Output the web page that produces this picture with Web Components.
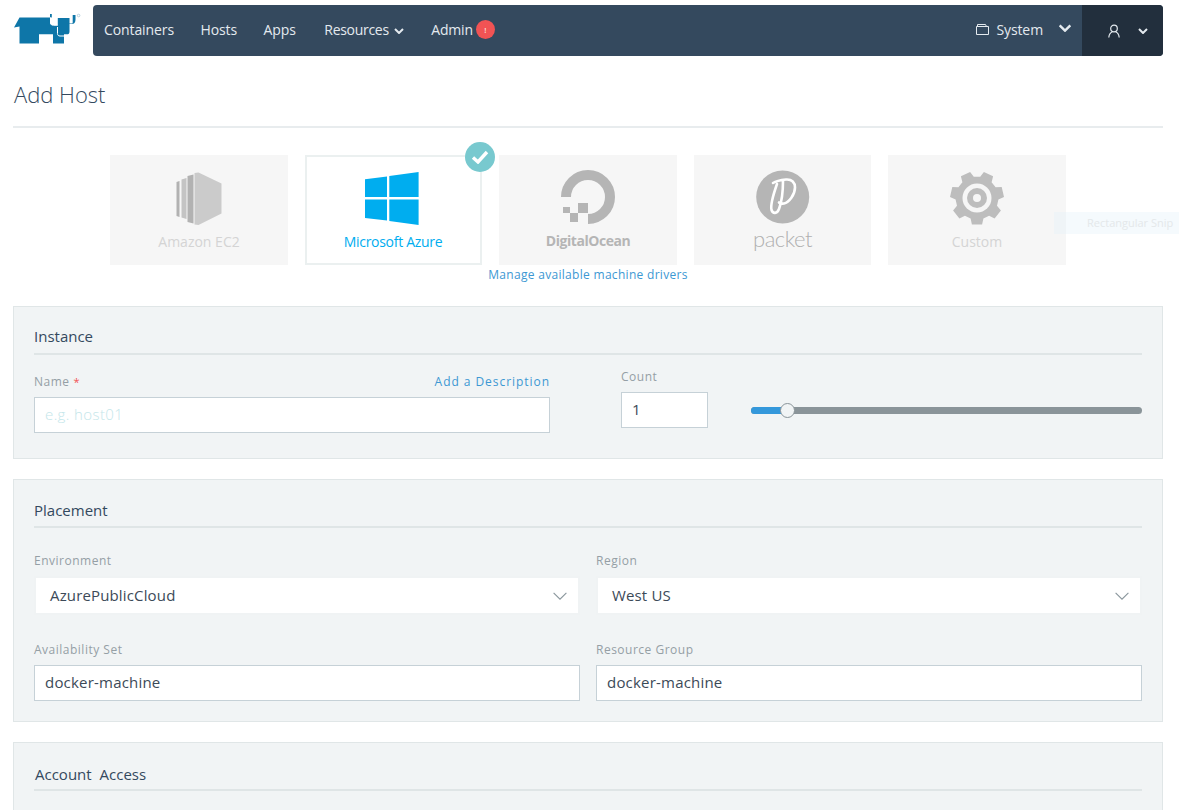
<!DOCTYPE html>
<html lang="en">
<head>
<meta charset="utf-8">
<title>Add Host</title>
<style>
    html, body { margin: 0; height: 810px; overflow: hidden; background: #fff; }
    body { font-family: "Open Sans", "Noto Sans", sans-serif; color: #3c4a58; }
</style>
</head>
<body>
<rk-page>
    <rk-nav></rk-nav>
    <rk-title>Add Host</rk-title>
    <rk-drivers>
        <rk-driver label="Amazon EC2">
            <svg slot="icon" width="46" height="54" viewBox="176.500 171 46 54">
                <path fill="#cbcbcb" d="M195 173l4-.500 23 11v30l-23 11.500-4-.500z"/>
                <path fill="#b2b2b2" d="M177 182l3-1v36l-3-1zM188 176l6-1.500v49l-6-1.500z"/>
                <path fill="#c4c4c4" d="M182 179.500l5-1.500v41l-5-1.500z"/>
            </svg>
        </rk-driver>
        <rk-driver label="Microsoft Azure" active>
            <svg slot="icon" width="54" height="54" viewBox="365 171 54 54">
                <path fill="#00adef" d="M365 179.300l22-2.700V197h-22zM389.300 176l29.300-4v25h-29.300zM365 199.600h22v21l-22-2.700zM389.300 199.600h29.300v25.400l-29.300-4z"/>
            </svg>
        </rk-driver>
        <rk-driver label="DigitalOcean" brand="do">
            <svg slot="icon" width="56" height="56" viewBox="560 170 56 56">
                <path fill="none" stroke="#b5b5b5" stroke-width="10" d="M566 197a22 22 0 1 1 22 22"/>
                <path fill="#b5b5b5" d="M578 203h10v10h-10zM570 213h8v9h-8zM563 207h7v6h-7z"/>
            </svg>
        </rk-driver>
        <rk-driver label="packet" brand="packet">
            <svg slot="icon" width="56" height="56" viewBox="755 170 56 56">
                <circle cx="782.700" cy="197" r="26.500" fill="#b5b5b5"/>
                <path fill="none" stroke="#fff" stroke-width="2.600" stroke-linecap="round" d="M773 183c3-2 8-3 13-3.500 6-.5 9 3 9 8 0 7-6 15-11 16-2 .3-4 0-5-1M783 181c0 8-1 20-4 28-2 5-6 5-7.500 1-1.500-6 2-16 5.500-26"/>
            </svg>
        </rk-driver>
        <rk-driver label="Custom">
            <svg slot="icon" width="56" height="56" viewBox="949 170 56 56">
                <path id="gear" fill="#bdbdbd"/>
                <circle cx="977" cy="198" r="14.500" fill="#f6f6f6"/>
                <circle cx="977" cy="198" r="10" fill="#bdbdbd"/>
                <circle cx="977" cy="198" r="4" fill="#f6f6f6"/>
            </svg>
        </rk-driver>
    </rk-drivers>
    <rk-link-row>Manage available machine drivers</rk-link-row>

    <rk-section heading="Instance" kind="instance">
        <rk-instance-fields></rk-instance-fields>
    </rk-section>

    <rk-section heading="Placement" kind="placement">
        <rk-field label="Environment"><rk-select value="AzurePublicCloud"></rk-select></rk-field>
        <rk-field label="Region"><rk-select value="West US"></rk-select></rk-field>
        <rk-field label="Availability Set"><rk-input value="docker-machine"></rk-input></rk-field>
        <rk-field label="Resource Group"><rk-input value="docker-machine"></rk-input></rk-field>
    </rk-section>

    <rk-section heading="Account Access" kind="account"></rk-section>
</rk-page>
<rk-snip>Rectangular Snip</rk-snip>

<script>
// Small helper: every element below is a plain shadow root plus a style block.
function defineElement (name, html, setup) {
    const template = document.createElement('template');
    template.innerHTML = html;
    class Element extends HTMLElement {
        constructor () {
            super();
            this.attachShadow({ mode: 'open' });
            this.shadowRoot.appendChild(template.content.cloneNode(true));
        }
        connectedCallback () {
            if (setup) setup(this, this.shadowRoot);
        }
    }
    customElements.define(name, Element);
}

const chevron = (w, h, sw, color) => `<svg width="${w}" height="${h}" viewBox="0 0 10 6"><path d="M1 1l4 4 4-4" fill="none" stroke="${color}" stroke-width="${sw}"/></svg>`;

// Seven tooth gear, one tooth pointing straight down.
function gearPath (cx, cy, outer, inner) {
    const teeth = 7;
    const points = [];
    for (let i = 0; i < teeth; i++) {
        const mid = Math.PI / 2 + i * 2 * Math.PI / teeth;
        [[-.30, inner], [-.19, outer], [.19, outer], [.30, inner]].forEach(([off, r]) => {
            points.push((cx + r * Math.cos(mid + off)).toFixed(1) + ' ' + (cy + r * Math.sin(mid + off)).toFixed(1));
        });
    }
    return 'M' + points.join('L') + 'z';
}
document.getElementById('gear').setAttribute('d', gearPath(977, 198, 27, 21.500));

defineElement('rk-page', `
<style>
    :host { display: block; padding: 5px 16px 0 13px; }
</style>
<slot></slot>`);

defineElement('rk-nav', `
<style>
    :host { display: flex; height: 51px; align-items: stretch; font-size: 14px; color: #e4eaef; letter-spacing: -.1px; }
    .logo { width: 80px; flex: none; }
    .bar { flex: 1; display: flex; align-items: center; justify-content: space-between; background: #34495e; border-radius: 4px; overflow: hidden; }
    .links { display: flex; align-items: center; gap: 26.500px; padding-left: 11px; padding-bottom: 2px; }
    .links span { display: flex; align-items: center; white-space: nowrap; }
    .links .res { letter-spacing: -.3px; margin-left: 2px; }
    .links .admin { margin-left: 1px; letter-spacing: -.2px; }
    .chev { margin-left: 5px; margin-top: 3px; display: flex; }
    .badge { width: 19px; height: 19px; border-radius: 50%; background: #f15354; color: #fff; font-size: 8px; font-weight: 400; display: flex; align-items: center; justify-content: center; margin-left: 3px; }
    .right { display: flex; align-items: stretch; height: 100%; }
    .env { display: flex; align-items: center; padding-right: 10px; padding-bottom: 2px; }
    .env svg.folder { margin-right: 7px; }
    .env .chev { margin-left: 15px; margin-top: -3px; }
    .user { width: 81px; background: #222f3d; display: flex; align-items: center; box-sizing: border-box; padding-left: 26px; }
    .user .chev { margin-left: 18px; margin-top: 0; }
</style>
<svg class="logo" viewBox="0 0 80 51" width="80" height="51">
    <g transform="translate(-13 -5)">
        <path fill="#0e76a8" d="M14 27.500l5.500-10H50v5c0 1.500.7 2.500 2.500 2.500h5.300v-7H69.500v5.500h2.200c.8 0 1-.4 1-1.500V15h2.300l.5 0v4.500c0 3.200-1.500 4.500-3.500 4.500H69.500v7.500c0 2-.8 2.800-2.800 2.800H64v9.200H53V34.300H39v9.200H19.500V26.500z"/>
        <path fill="#0e76a8" d="M50 14h1.800v3.500H50z"/>
        <path fill="none" stroke="#fff" stroke-width="1" d="M50.500 17.500v5c0 1.800 1 2.800 3 2.800h4.300M57.500 27v6.500c0 1.800 1 2.500 2.500 2.500h4"/>
        <circle cx="78.600" cy="15.500" r="1.300" fill="none" stroke="#8fb8cc" stroke-width=".6"/>
    </g>
</svg>
<div class="bar">
    <div class="links">
        <span>Containers</span>
        <span>Hosts</span>
        <span>Apps</span>
        <span class="res">Resources<i class="chev">${chevron(10, 6, 2, '#e4eaef')}</i></span>
        <span class="admin">Admin<b class="badge">!</b></span>
    </div>
    <div class="right">
        <div class="env">
            <svg class="folder" width="13" height="11" viewBox="0 0 13 11"><path d="M.5 2.500h12v8H.5zM1.500 2.500V.5h8l1 2" fill="none" stroke="#e4eaef"/></svg>
            <span>System</span>
            <i class="chev">${chevron(14, 8, 1.800, '#e4eaef')}</i>
        </div>
        <div class="user">
            <svg width="12" height="14" viewBox="0 0 12 14"><circle cx="6" cy="4.500" r="3.300" fill="none" stroke="#e4eaef" stroke-width="1.200"/><path d="M.8 13.500c.3-3 1.800-5 3.500-5.500M11.200 13.500c-.3-3-1.800-5-3.500-5.500" fill="none" stroke="#e4eaef" stroke-width="1.200"/></svg>
            <i class="chev">${chevron(10, 6, 2, '#e4eaef')}</i>
        </div>
    </div>
</div>`);

defineElement('rk-title', `
<style>
    :host { display: block; margin-top: 23px; height: 47px; border-bottom: 2px solid #e8ecee; font-size: 22px; font-weight: 300; line-height: 30px; color: #34495e; padding-left: 1px; }
</style>
<slot></slot>`);

defineElement('rk-drivers', `
<style>
    :host { display: flex; justify-content: center; gap: 17px; margin-top: 27px; position: relative; }
</style>
<slot></slot>`);

defineElement('rk-driver', `
<style>
    :host { display: flex; flex-direction: column; align-items: center; width: 177.500px; height: 110px; box-sizing: border-box; background: #f6f6f6; position: relative; color: #d4d4d4; font-size: 14px; padding-top: 15px; }
    :host([active]) { background: #fff; border: 2px solid #ebf0f0; color: #00adef; letter-spacing: -.3px; }
    :host([brand="do"]) { color: #b5b5b5; letter-spacing: -.45px; }
    .icon { height: 56px; display: flex; align-items: center; justify-content: center; }
    :host([active]) .icon { margin: -2px 4px 0 0; }
    .label { margin-top: 5px; line-height: 22px; white-space: nowrap; }
    :host([active]) .label { margin-right: 1px; }
    :host([brand="do"]) .label { font-weight: 700; margin-top: 4px; }
    :host([brand="packet"]) .label { font-family: "Lato", sans-serif; font-weight: 300; font-size: 22px; letter-spacing: -.5px; color: #b0b0b0; margin-top: 2px; }
    .check { display: none; position: absolute; top: -15px; right: -15px; width: 30px; height: 30px; border-radius: 50%; background: #78c9cf; align-items: center; justify-content: center; }
    :host([active]) .check { display: flex; }
</style>
<div class="icon"><slot name="icon"></slot></div>
<div class="label"></div>
<div class="check"><svg width="18" height="14" viewBox="0 0 18 14"><path d="M2 7.500l5 4.500 9-10" fill="none" stroke="#fff" stroke-width="3.400"/></svg></div>`, (el, root) => {
    root.querySelector('.label').textContent = el.getAttribute('label');
});

defineElement('rk-link-row', `
<style>
    :host { display: block; text-align: center; font-size: 12px; line-height: 18px; color: #3d98d3; letter-spacing: .3px; margin-top: 1px; }
</style>
<slot></slot>`);

defineElement('rk-section', `
<style>
    :host { display: block; background: #f1f4f5; border: 1px solid #e0e6e7; padding: 0 20px; margin-bottom: 20px; box-sizing: border-box; }
    :host([kind="instance"]) { height: 153px; margin-top: 22px; }
    :host([kind="placement"]) { height: 243px; }
    :host([kind="account"]) { height: 120px; }
    h2 { margin: 0; padding-top: 18px; height: 48px; box-sizing: border-box; border-bottom: 2px solid #dfe5e6; font-size: 15px; font-weight: 400; line-height: 22px; color: #34495e; }
    :host([kind="placement"]) h2 { padding-top: 19px; }
    :host([kind="account"]) h2 { padding: 20px 0 0 1px; word-spacing: 4px; }
    .grid { display: block; }
    :host([kind="placement"]) .grid { display: grid; grid-template-columns: 1fr 1fr; column-gap: 16px; row-gap: 26px; padding-top: 24px; }
</style>
<h2></h2>
<div class="grid"><slot></slot></div>`, (el, root) => {
    root.querySelector('h2').textContent = el.getAttribute('heading');
});

defineElement('rk-field', `
<style>
    :host { display: block; }
    .label { display: flex; justify-content: space-between; font-size: 12px; line-height: 18px; color: #959fa5; margin-bottom: 6px; letter-spacing: .5px; }
    .req { color: #f15354; margin-left: 4px; font-size: 11px; }
</style>
<div class="label"><span class="text"></span><slot name="side"></slot></div>
<slot></slot>`, (el, root) => {
    const text = root.querySelector('.text');
    text.textContent = el.getAttribute('label');
    if (el.hasAttribute('required')) {
        const star = document.createElement('span');
        star.className = 'req';
        star.textContent = '*';
        text.appendChild(star);
    }
});

defineElement('rk-input', `
<style>
    :host { display: block; height: 36px; box-sizing: border-box; background: #fff; border: 1px solid #c6d1d7; padding: 0 10px; font-size: 15px; line-height: 32px; color: #3c4a58; letter-spacing: .2px; }
    :host([placeholder]) { color: #c4e6ea; font-weight: 300; letter-spacing: .4px; }
</style>
<span class="v"></span>`, (el, root) => {
    root.querySelector('.v').textContent = el.getAttribute('value') || el.getAttribute('placeholder') || '';
});

defineElement('rk-select', `
<style>
    :host { display: flex; align-items: center; justify-content: space-between; height: 39px; box-sizing: border-box; background: #fff; border: 2px solid #f0f3f4; padding: 0 10px 0 14px; font-size: 15px; color: #3c4a58; letter-spacing: .15px; }
    .v { margin-top: -2px; }
</style>
<span class="v"></span>${chevron(16, 10, .7, '#8a969d')}`, (el, root) => {
    root.querySelector('.v').textContent = el.getAttribute('value');
});

defineElement('rk-slider', `
<style>
    :host { display: block; position: relative; height: 7px; border-radius: 4px; background: #8a9499; }
    .fill { width: 36px; height: 100%; border-radius: 4px 0 0 4px; background: #3498db; }
    .thumb { position: absolute; left: 29px; top: -4px; width: 15px; height: 15px; box-sizing: border-box; border-radius: 50%; background: #f1f4f5; border: 1px solid #8a9499; }
</style>
<div class="fill"></div><div class="thumb"></div>`);

defineElement('rk-instance-fields', `
<style>
    :host { display: flex; }
    .name { width: 516px; flex: none; padding-top: 18px; }
    .count { margin-left: 71px; width: 87px; flex: none; padding-top: 13px; }
    .slide { flex: 1; margin-left: 43px; padding-top: 52px; }
    .add { color: #3d98d3; letter-spacing: .95px; }
</style>
<div class="name">
    <rk-field label="Name" required>
        <span slot="side" class="add">Add a Description</span>
        <rk-input placeholder="e.g. host01"></rk-input>
    </rk-field>
</div>
<div class="count">
    <rk-field label="Count"><rk-input value="1"></rk-input></rk-field>
</div>
<div class="slide"><rk-slider></rk-slider></div>`);

defineElement('rk-snip', `
<style>
    :host { position: absolute; left: 1054px; top: 212px; width: 125px; height: 22px; background: rgba(225, 240, 250, .35); color: #e4e8ea; font-size: 11px; line-height: 22px; padding-left: 33px; box-sizing: border-box; white-space: nowrap; overflow: hidden; }
</style>
<slot></slot>`);
</script>
</body>
</html>
